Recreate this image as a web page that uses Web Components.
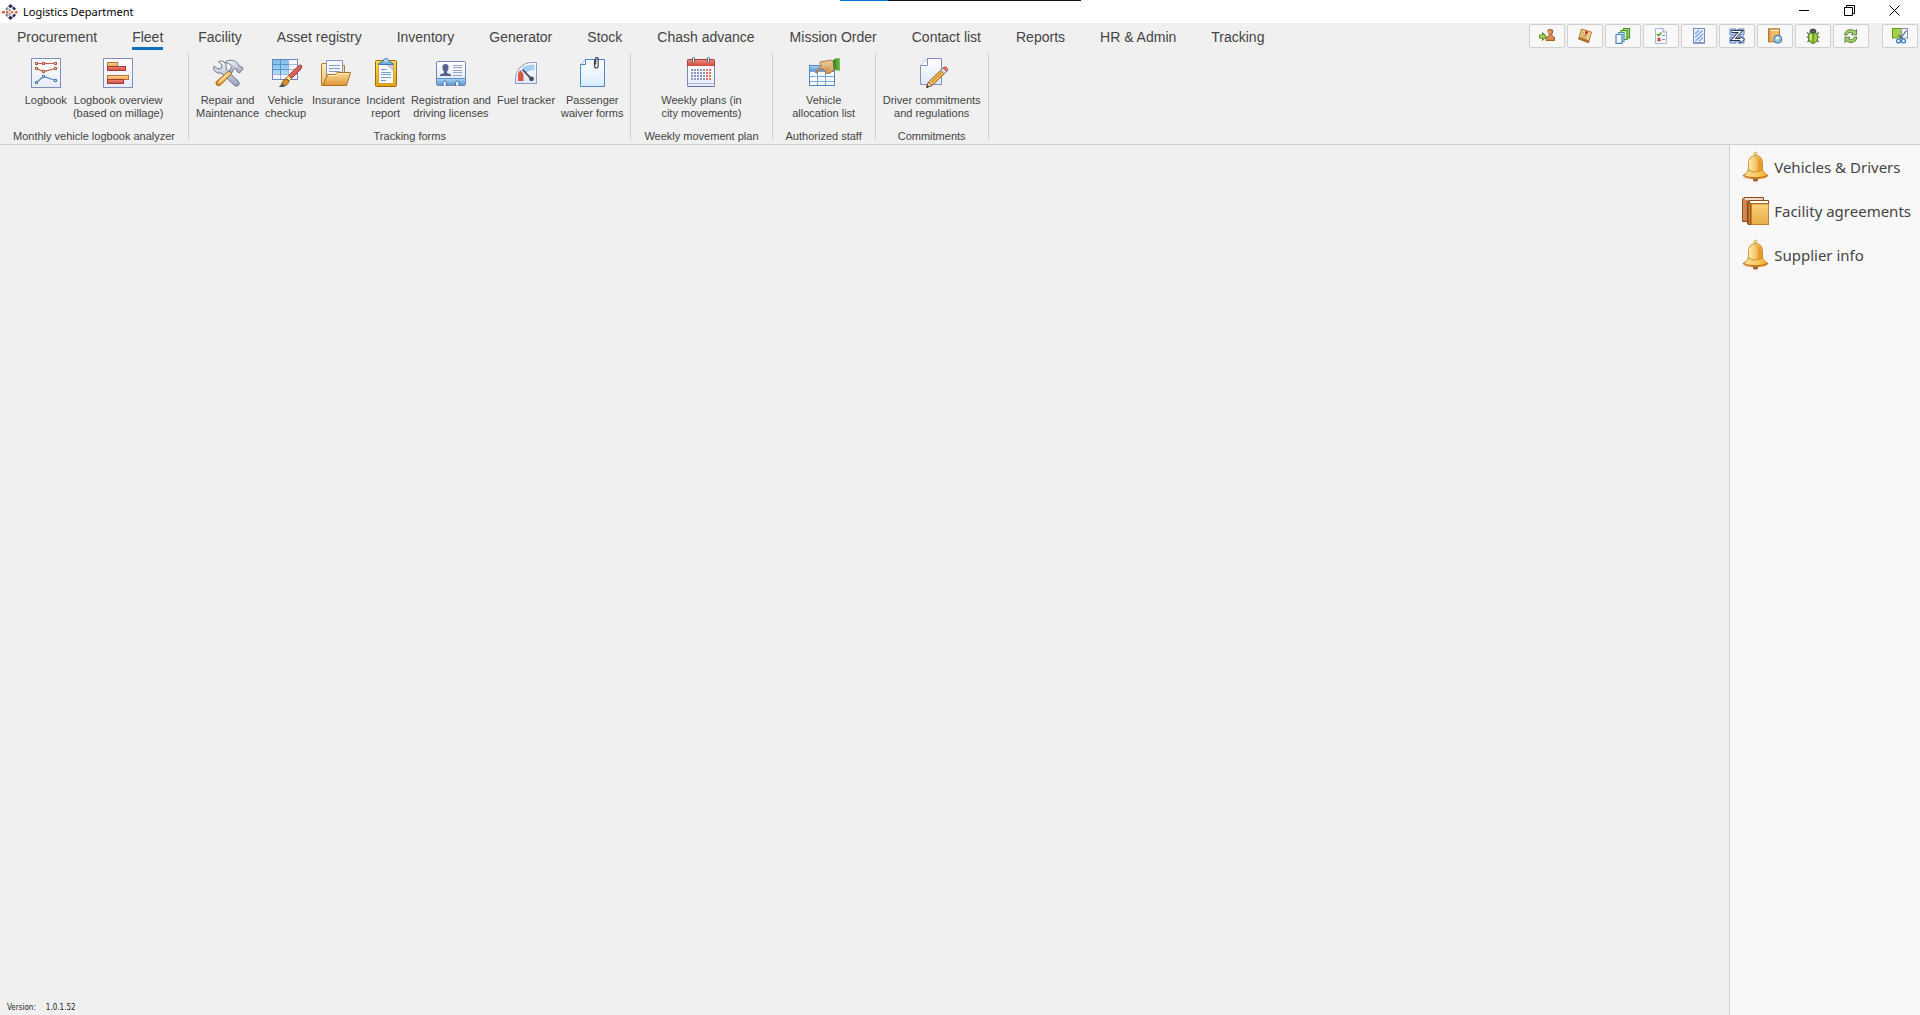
<!DOCTYPE html>
<html lang="en">
<head>
<meta charset="utf-8">
<title>Logistics Department</title>
<style>
html, body { height: 100%; margin: 0; }
body { background: #f0f0f0; color: #444; font: 11px/13px "Liberation Sans", Arial, sans-serif; }
</style>
</head>
<body>
<app-window>
  <title-bar slot="title">Logistics Department</title-bar>

  <tab-link slot="tab">Procurement</tab-link>
  <tab-link slot="tab" active>Fleet</tab-link>
  <tab-link slot="tab">Facility</tab-link>
  <tab-link slot="tab">Asset registry</tab-link>
  <tab-link slot="tab">Inventory</tab-link>
  <tab-link slot="tab">Generator</tab-link>
  <tab-link slot="tab">Stock</tab-link>
  <tab-link slot="tab">Chash advance</tab-link>
  <tab-link slot="tab">Mission Order</tab-link>
  <tab-link slot="tab">Contact list</tab-link>
  <tab-link slot="tab">Reports</tab-link>
  <tab-link slot="tab">HR &amp; Admin</tab-link>
  <tab-link slot="tab">Tracking</tab-link>

  <tool-button slot="tool" icon="stamp" label="Switch user"></tool-button>
  <tool-button slot="tool" icon="note" label="Notes"></tool-button>
  <tool-button slot="tool" icon="stack" label="Cascade"></tool-button>
  <tool-button slot="tool" icon="checklist" label="Checklist"></tool-button>
  <tool-button slot="tool" icon="hatch" label="Background"></tool-button>
  <tool-button slot="tool" icon="zorder" label="Order"></tool-button>
  <tool-button slot="tool" icon="bookweb" label="Directory"></tool-button>
  <tool-button slot="tool" icon="bug" label="Report a bug"></tool-button>
  <tool-button slot="tool" icon="refresh" label="Refresh"></tool-button>
  <tool-button slot="snip" icon="snip" label="Snip"></tool-button>

  <ribbon-group slot="group" caption="Monthly vehicle logbook analyzer">
    <ribbon-button icon="linechart">Logbook</ribbon-button>
    <ribbon-button icon="barchart">Logbook overview<br>(based on millage)</ribbon-button>
  </ribbon-group>
  <ribbon-group slot="group" caption="Tracking forms">
    <ribbon-button icon="tools">Repair and<br>Maintenance</ribbon-button>
    <ribbon-button icon="brushgrid">Vehicle<br>checkup</ribbon-button>
    <ribbon-button icon="folder">Insurance</ribbon-button>
    <ribbon-button icon="clipboard">Incident<br>report</ribbon-button>
    <ribbon-button icon="idcard">Registration and<br>driving licenses</ribbon-button>
    <ribbon-button icon="gauge">Fuel tracker</ribbon-button>
    <ribbon-button icon="clippage">Passenger<br>waiver forms</ribbon-button>
  </ribbon-group>
  <ribbon-group slot="group" caption="Weekly movement plan">
    <ribbon-button icon="calendar">Weekly plans (in<br>city movements)</ribbon-button>
  </ribbon-group>
  <ribbon-group slot="group" caption="Authorized staff">
    <ribbon-button icon="handgrid">Vehicle<br>allocation list</ribbon-button>
  </ribbon-group>
  <ribbon-group slot="group" caption="Commitments">
    <ribbon-button icon="pencilpage">Driver commitments<br>and regulations</ribbon-button>
  </ribbon-group>

  <side-link slot="side" icon="bell">Vehicles &amp; Drivers</side-link>
  <side-link slot="side" icon="books">Facility agreements</side-link>
  <side-link slot="side" icon="bell">Supplier info</side-link>

  <version-label slot="version" number="1.0.1.52">Version:</version-label>
</app-window>

<script>
const grad = (id, a, b, dir = "x2='0' y2='1'") =>
  `<linearGradient id="${id}" x1="0" y1="0" ${dir}><stop offset="0" stop-color="${a}"/><stop offset="1" stop-color="${b}"/></linearGradient>`;

const calendarDots = () => {
  let s = "";
  for (let r = 0; r < 4; r++)
    for (let c = 0; c < 7; c++)
      s += `<rect x="${6 + c * 3}" y="${12 + r * 3}" width="2" height="2" fill="${c > 4 ? "#e8705c" : "#8b97c4"}"/>`;
  return s;
};

/* Large icons use a 32-unit box, toolbar icons a 16-unit box. */
const ICONS = {
  linechart: [32, `${grad("g", "#ffffff", "#e6ebf6")}
    <rect x="1.5" y="1.5" width="29" height="29" fill="url(#g)" stroke="#7f8fbd"/>
    <g fill="none" stroke-width="1.2"><path d="M6.5 6.5H25.5" stroke="#c9604f"/><path d="M6.5 11.5L13.5 14.5L25.5 11.5" stroke="#bd6344"/><path d="M6.5 25.5L13.5 19.5L25.5 23.5" stroke="#4f8ac8"/></g>
    <g fill="#fff" stroke-width="1.1"><g stroke="#b8463f"><circle cx="6.5" cy="6.5" r="1.2"/><circle cx="13.5" cy="6.5" r="1.2"/><circle cx="25.5" cy="6.5" r="1.2"/></g>
    <g stroke="#b4532f"><circle cx="6.5" cy="11.5" r="1.2"/><circle cx="13.5" cy="14.5" r="1.2"/><circle cx="25.5" cy="11.5" r="1.2"/></g>
    <g stroke="#3f6fb0"><circle cx="6.5" cy="25.5" r="1.2"/><circle cx="13.5" cy="19.5" r="1.2"/><circle cx="25.5" cy="23.5" r="1.2"/></g></g>`],
  barchart: [32, `${grad("g", "#ffffff", "#e6ebf6")}${grad("o", "#fbd99a", "#e8a54c")}${grad("r", "#ee8a7c", "#cc4a42")}
    <rect x="1.5" y="1.5" width="29" height="29" fill="url(#g)" stroke="#7f8fbd"/>
    <rect x="5.5" y="5.5" width="10" height="4" fill="url(#o)" stroke="#b8742e"/><rect x="5.5" y="9.5" width="18" height="4" fill="url(#r)" stroke="#a33a36"/>
    <rect x="5.5" y="18.5" width="21" height="4" fill="url(#o)" stroke="#b8742e"/><rect x="5.5" y="22.5" width="16" height="4" fill="url(#r)" stroke="#a33a36"/>`],
  tools: [32, `${grad("m", "#f4f6fa", "#98a3b8")}${grad("o", "#ffd98a", "#e08f1e")}
    <path d="M2 9C0.500 13 4 17 9 16L12 18.500L22.500 28.500Q25 30 26.800 28Q28 26 26 24L16 14.500L14 11.500C15 7.500 12.500 3.500 8 4L6.500 5L10 8L9.500 11L6 12Z" fill="url(#m)" stroke="#6c778d"/>
    <path d="M17 14L19.500 16.800L9 27.500Q7 29.800 4.800 28Q2.800 26 5 24Z" fill="url(#o)" stroke="#9a6220"/>
    <path d="M13 5.500C16 2.500 21 2.500 25 5.500L27 9L30 10L31 12L27.500 16L25 14.500L24.500 12L22 11.500L19.500 16L17 14L20 9.500C18 6.500 15.500 6 13 5.500Z" fill="url(#m)" stroke="#6c778d"/>
    <path d="M15 17.500L7 25.500" stroke="#ffeab8" stroke-width="1.200"/>`],
  brushgrid: [32, `${grad("b", "#7ebce8", "#b5dcf4")}${grad("r", "#f0907e", "#c23a34", "x2='1' y2='1'")}
    <rect x="2.500" y="2.500" width="25" height="20" fill="#f4f6fc" stroke="#6f86c4"/><rect x="3" y="3" width="16" height="15" fill="url(#b)"/>
    <path d="M3 7.500H27M3 12.500H27M3 17.500H27M10.500 3V22M18.500 3V22" stroke="#a5b6dc" fill="none" stroke-width="1"/><path d="M3 7.500H19M3 12.500H19M10.500 3V18" stroke="#5593cc" fill="none"/>
    <path d="M31 8Q33 10.500 30 13L21.500 21.500L18.500 18.500L27.500 10Q29.500 7.500 31 8Z" fill="url(#r)" stroke="#a8332f"/>
    <path d="M18.500 18.500L21.500 21.500L19 24L16 21Z" fill="#f6d98c" stroke="#8a6a3a" stroke-width=".8"/>
    <path d="M16 21.500L19 24.500C18 28 14 30 9.500 29.500C12 28 12.500 22.500 16 21.500Z" fill="#d98f24" stroke="#6b4514" stroke-width=".8"/><path d="M9.500 29.800Q12 29 12.800 26.500L15 29Q12.500 30.300 9.500 29.800Z" fill="#24508c"/>`],
  folder: [32, `${grad("a", "#fff0c4", "#f0b95a")}${grad("b", "#ffdf9c", "#dd9334")}
    <path d="M1.500 28.500V7.500Q1.500 6.500 3 6.500H6L8 8.500H24.500V28.500Z" fill="url(#a)" stroke="#b07a30"/>
    <path d="M6.500 3.500H22.500V22H6.500Z" fill="#f5f7fd" stroke="#8793c4"/><path d="M9 8.500H20M9 11.500H20M9 14.500H20" stroke="#8d9ac8"/>
    <path d="M3 28.500L7.500 17.500H15L17.500 15.500H30.500L26.500 28.500Z" fill="url(#b)" stroke="#b06d22"/><path d="M8.500 18.500H15.500L18 16.500H29.500" stroke="#fff2c8" fill="none"/>`],
  clipboard: [32, `${grad("y", "#ffe04a", "#e5a010")}${grad("c", "#e0f1fd", "#5b9ad6")}
    <rect x="5.500" y="3.500" width="21" height="26" rx="1" fill="url(#y)" stroke="#9a6a10"/>
    <rect x="8.500" y="6.500" width="15" height="20" fill="#fafbff" stroke="#c49a2a" stroke-width=".8"/>
    <path d="M15 7H23V14Z" fill="#c8cbd8"/><path d="M11 12.500H17M11 15.500H21M11 17.500H21M11 20.500H21M11 23.500H16" stroke="#7a9bd0"/>
    <path d="M8.500 7.500Q9 5 12.500 5Q13.500 1.500 16 1.500T19.500 5Q23 5 23.500 7.500Z" fill="url(#c)" stroke="#3e78b8"/>`],
  idcard: [32, `${grad("w", "#ffffff", "#e4eaf6")}${grad("b", "#a6d4f2", "#5b9cd4")}
    <path d="M2 21.500H30V28H2Z" fill="url(#b)"/><rect x="1.500" y="4.500" width="29" height="24" rx="1" fill="none" stroke="#7585b8"/><path d="M2 5H30V21H2Z" fill="url(#w)"/><path d="M2 21.500H30" stroke="#5c8fc8"/>
    <path d="M8 28.500V25.500A1.800 1.800 0 0 1 11.500 25.500V28.500M20.500 28.500V25.500A1.800 1.800 0 0 1 24 25.500V28.500" fill="#f0f0f0" stroke="#3f6ca8"/>
    <path d="M7.500 9.500Q7.500 7 10.500 7T13.500 9.500Q13.800 13 12 14.500V16L16 17.500V19H5V17.500L9 16V14.500Q7.200 13 7.500 9.500Z" fill="#56618e"/>
    <path d="M18 8.500H27M18 10.500H27M18 13.500H27M18 15.500H27M18 18.500H27" stroke="#9aa6cc"/>`],
  gauge: [32, `${grad("w", "#ffffff", "#dfe6f3")}
    <path d="M26.500 5.500V26.500H5.500V21C6.500 12 13 5.500 22 5.500Z" fill="url(#w)" stroke="#8d99c6"/>
    <path d="M12 10.500Q17 7.500 24.500 7.500V13Q19 13 15.500 15.500Z" fill="#a4cfee"/><path d="M8 24V17Q9.500 13.500 10.500 13L13.500 17V24Z" fill="#d95645"/>
    <path d="M12.500 12.500L20.500 21" stroke="#3a4258" stroke-width="1.800"/><circle cx="21.500" cy="21.800" r="2.400" fill="#444c64"/>`],
  clippage: [32, `${grad("w", "#ffffff", "#d6ecfb")}
    <path d="M9.500 2.500H28.500V29.500H4.500V7.500Z" fill="url(#w)" stroke="#4e88c8"/><path d="M4.500 7.500H9.500V2.500" fill="#fff" stroke="#4e88c8"/>
    <path d="M18.500 3V8.500Q18.500 11 20.300 11T22.200 8.500V2Q22.200 .5 20.800 .5T19.700 2V7.500" fill="none" stroke="#3d4656" stroke-width="1.200"/>`],
  calendar: [32, `${grad("w", "#ffffff", "#e8ecf8")}${grad("r", "#f0907e", "#cf463c")}
    <rect x="2.500" y="3.500" width="27" height="26" rx="1" fill="url(#w)" stroke="#7a86b4"/><path d="M2 2.500H30V9H2Z" fill="url(#r)"/><path d="M2.500 9V3.500Q2.500 2.500 3.500 2.500H28.500Q29.500 2.500 29.500 3.500V9" fill="none" stroke="#a83f38"/>
    <path d="M3 26.500H29" stroke="#b0bbdc"/><path d="M2.500 29.500H29.500" stroke="#5f6ea6"/>${calendarDots()}
    <g fill="#f2f2f4" stroke="#555d70"><rect x="7.500" y=".5" width="2" height="5" rx="1"/><rect x="22.500" y=".5" width="2" height="5" rx="1"/></g>`],
  handgrid: [32, `${grad("b", "#a9d2f2", "#5e97d2")}${grad("h", "#f4cf9e", "#d0935a")}${grad("s", "#2f7a20", "#78c24a", "x2='1' y2='0'")}
    <rect x="1.500" y="8.500" width="25" height="20" fill="#fafcff" stroke="#4f8ac8"/><rect x="2" y="9" width="24" height="5" fill="url(#b)"/>
    <path d="M2 14.500H26M2 19.500H26M2 24.500H26M9.500 14V28M17.500 14V28" stroke="#7ba8d8"/>
    <path d="M7.500 15.500L13.500 8L12 6.500Q11.500 4.500 14 4.500L18.500 4Q21 2 25 4L26.500 13L21 16.500L18.500 16.500L15.500 12.500L12.500 11.500L9.500 15.500Q8.500 17 7.500 15.500Z" fill="url(#h)" stroke="#99622e" stroke-width=".8"/>
    <path d="M15 11.500L18 14.500M17.500 9.500L20.500 13" stroke="#b07a48" stroke-width=".7"/>
    <path d="M25 3L28 1.200H32V14L29.500 13.500Q26.500 13 25.500 11Z" fill="url(#s)"/>`],
  pencilpage: [32, `${grad("w", "#ffffff", "#dfe6f5")}${grad("p", "#ffe08a", "#e8951e", "x2='1' y2='1'")}
    <path d="M11.500 1.500H25.500V27.500H4.500V8.500Z" fill="url(#w)" stroke="#8190c4"/><path d="M4.500 8.500H11.500V1.500" fill="#fff" stroke="#8190c4"/>
    <path d="M27 11L30.500 14.500L16 28.500L10.500 30.500L12.500 25Z" fill="url(#p)" stroke="#8e5a1e"/><path d="M15.500 25L27.500 13.500" stroke="#b8702a"/>
    <path d="M12.500 25L16 28.500L10.500 30.500Z" fill="#f3d9b4" stroke="#6b5138" stroke-width=".8"/><path d="M11.500 28L13 29.700L10.300 30.700Z" fill="#333"/>
    <path d="M24.800 13L27.300 10.500L31 14L28.300 16.500Z" fill="#d9dfec" stroke="#7c86a4" stroke-width=".7"/><path d="M27.500 10.500Q29 9 31 11T31 14L30.500 14.500L27 11Z" fill="#e87868" stroke="#a8423a" stroke-width=".8"/>`],
  bell: [32, `${grad("y", "#fff0b4", "#e89a1c", "x2='1' y2='0'")}${grad("z", "#ffe9a0", "#f0b030", "x2='1' y2='0'")}
    <circle cx="16.500" cy="28" r="2.600" fill="#a65a1c"/><circle cx="16.500" cy="2.800" r="1.500" fill="#ffe6a0" stroke="#c98c2c" stroke-width=".8"/>
    <path d="M9.500 18C9.500 21 7 22.500 4 24.500C5 26.800 10 27.500 16.500 27.500S28 26.800 29 24.500C26 22.500 23.500 21 23.500 18Z" fill="url(#z)" stroke="#c07c1a" stroke-width=".9"/>
    <path d="M16.500 4.500C11.500 4.500 9.500 8.500 9.500 12V19Q16.500 23 23.500 19V12C23.500 8.500 21.500 4.500 16.500 4.500Z" fill="url(#y)" stroke="#c98c2c" stroke-width=".9"/>
    <path d="M18 6.500Q20 12 19 20.500L21.500 19.500Q22.500 9 18 6.500Z" fill="#d97e10" opacity=".45"/>
    <path d="M4.500 24.500Q16.500 29 28.500 24.500" fill="none" stroke="#b8651a" stroke-width=".9"/>`],
  books: [32, `${grad("a", "#d98c5a", "#a8501e", "x2='1' y2='0'")}${grad("b", "#f6d07a", "#e8ad48")}
    <path d="M3.500 4L5 2.500H24.500V26.500H3.500Z" fill="url(#a)" stroke="#8d4a1c"/><path d="M6 4H24" stroke="#fff" stroke-width="1.500"/><path d="M6.500 5.500H24V26H6.500Z" fill="#c9824a"/>
    <path d="M8.500 7.500L10.500 5.500H29.500V29.500H9.500Q8.500 29.500 8.500 28Z" fill="#a85a1c" stroke="#8d4a1c"/><path d="M11 7H29" stroke="#fff" stroke-width="2"/><path d="M12.500 9H29.500V29.500H12.500Z" fill="url(#b)" stroke="#c0822a" stroke-width=".8"/><path d="M10.500 9V29" stroke="#c9803c" stroke-width="1"/>`],
  logo: [16, `<g fill="#2e3058"><path d="M6 2.200L8.500 0L11 2.200L8.500 4.200Z"/><path d="M10 4L12 2.500L14 5L12 6.500Z"/><path d="M6 13.800L8.500 16L11 13.800L8.500 11.800Z"/><path d="M10 12L12 13.500L14 11L12 9.500Z"/></g>
    <g fill="#7d8ea0"><path d="M3 5L5.500 3L7 5L5 6.500Z"/><path d="M3 11L5.500 13L7 11L5 9.500Z"/><rect x="7" y="5" width="1.500" height="2.500"/><rect x="7" y="9" width="1.500" height="2.500"/></g>
    <g fill="#e2643c"><path d="M0 7H3V9.500H0Z"/><path d="M4 7H6.500V9.500H4Z"/><path d="M8.500 8.200L10 6.500L11.500 8.200L10 10Z"/><path d="M12.500 8.200L14.200 6.500L16 8.200L14.200 10Z"/></g>`],
  stamp: [16, `<path d="M.5 7H3.500V4.500L7.500 8.500L3.500 12.500V10H.5Z" fill="#8cc63a" stroke="#4b8a1c" stroke-width=".9"/><path d="M1.500 8.200H4.500" stroke="#dff2b0"/>
    <path d="M9 2Q11.500 1 13.500 2Q14.500 4 12.800 6L13 8L15.500 9.500V12.500H7V10L10 8L10.200 6Q8 4 9 2Z" fill="#d98b50" stroke="#9a5222" stroke-width=".9"/><path d="M7 12.300H15.500" stroke="#b8641e"/><path d="M10 3V5" stroke="#f6cfa0"/>`],
  note: [16, `<path d="M4.500 1L14.500 4L11.500 14.800L1.500 11Z" fill="#f0cd88" stroke="#a8742c" stroke-width=".9"/><path d="M1.500 11L2.500 9L12.200 12.400L11.500 14.800Z" fill="#a87034"/><path d="M4.500 4L7 4.800M4 6.500L10.500 8.500M3.500 8.500L9 10.200" stroke="#b98c48" stroke-width=".8"/><circle cx="9.500" cy="4.500" r="1.500" fill="#c8282a"/><path d="M9 6L8 7.500" stroke="#6c1c1c" stroke-width=".8"/>`],
  stack: [16, `<g stroke-width="1.2"><path d="M8.500 .5H14.500V10H8.500Z" fill="#a9d67c" stroke="#3e9a18"/><path d="M6 2.500H12V11.500H6Z" fill="#d9efb8" stroke="#3e9a18"/><path d="M3.500 4.500H9V13.500H3.500Z" fill="#d4e8f8" stroke="#4c94b4"/><path d="M1 6.500H7V15.300H1Z" fill="#f2f8ff" stroke="#4c84c4"/></g>`],
  checklist: [16, `<path d="M2.500 .5H10L13.500 4V15.500H2.500Z" fill="#f7f9fd" stroke="#aab6dc"/><path d="M10 .5V4H13.500" fill="#fff" stroke="#8a9ad0"/><path d="M4 6L5.500 7.500L8.500 4.500" fill="none" stroke="#5c9a1c" stroke-width="1.600"/><path d="M4.500 10L7.500 13M7.500 10L4.500 13" stroke="#d0403a" stroke-width="1.600"/><path d="M9 7.500H12M9 11.500H12" stroke="#7390cc"/>`],
  hatch: [16, `<rect x="2.500" y=".5" width="11" height="14.500" fill="#e9f1fb" stroke="#7589c4"/><path d="M4 6L8 2M4 9.500L11.500 2.500M4.500 13L12 6M8 13.500L12 9.500" stroke="#7ba2da" stroke-width="1.200"/><path d="M2.500 15H13.500" stroke="#5d70b0"/>`],
  zorder: [16, `<path d="M1 1H7V7H1ZM9 1H15V7H9ZM1 9H7V15H1ZM9 9H15V15H9Z" fill="#b4d4f2" stroke="#5b82c4"/><path d="M2.500 3.500H11.500L4 11.500H12" fill="none" stroke="#2c3650" stroke-width="3"/><path d="M11 8.500L15.500 11.500L11 15Z" fill="#fff" stroke="#2c3650" stroke-width=".9"/><path d="M3 3.500H11.500L4 11.500H13" fill="none" stroke="#fff" stroke-width="1.200"/>`],
  bookweb: [16, `<rect x="1.500" y=".8" width="11" height="13" fill="#f0b868" stroke="#b07428"/><path d="M3 1.500V13.500" stroke="#c98a3a"/><path d="M3.500 2.500H12" stroke="#fff2d0"/><circle cx="10.800" cy="11.200" r="4" fill="#9cc8ea" stroke="#3e6ea8"/><path d="M8.500 9.500L11 8.500L12 10.500L10 12Z" fill="#eef8e4"/><path d="M12 12L13.800 11L13 14Z" fill="#7cb258"/>`],
  bug: [16, `<path d="M2 4.500L4.500 6.500M1.500 9H4M2.500 14L4.500 12M14 4.500L11.500 6.500M14.500 9H12M13.500 14L11.500 12" stroke="#54603c" stroke-width="1.100"/><path d="M5 4.500Q4.500 1 8 1T11 4.500Z" fill="#566072" stroke="#343c4c"/><ellipse cx="8" cy="9.500" rx="4.700" ry="5.800" fill="#9bcb3c" stroke="#4f7c1c"/><path d="M8 4V15.500" stroke="#4f7c1c"/><path d="M6 6V12" stroke="#dff0a4" stroke-width="1.400"/><path d="M5 4.200H11L9.500 5.500H6.500Z" fill="#3d4656"/>`],
  refresh: [16, `<g fill="#a9cf74" stroke="#4c7a2a" stroke-width=".9"><path d="M1.500 7Q2 2 7.500 1.500Q10 1.500 11.800 3.200L13.500 1.500V6.800H8.500L10 5Q8 3.600 6 4.600Q4.500 5.300 4 7Z"/><path d="M14 9Q13.500 14 8 14.500Q5.500 14.500 3.700 12.800L2 14.500V9.200H7L5.500 11Q7.500 12.400 9.500 11.400Q11 10.700 11.500 9Z"/></g>`],
  snip: [16, `<rect x=".5" y=".5" width="9" height="9.500" fill="#a6d04a" stroke="#5f9a24"/><rect x="9.500" y=".5" width="6" height="9.500" fill="#f4f6fc" stroke="#8692c0"/><path d="M14.500 2.500L8 11M6.500 7L11 11" stroke="#55637a" stroke-width="1.200"/><circle cx="6.500" cy="13" r="1.900" fill="#fff" stroke="#3a82c8" stroke-width="1.400"/><circle cx="11.500" cy="13" r="1.900" fill="#fff" stroke="#3a82c8" stroke-width="1.400"/>`]
};

const drawIcon = name => {
  const [size, body] = ICONS[name];
  return `<svg class="icon" width="${size}" height="${size}" viewBox="0 0 ${size} ${size}" aria-hidden="true">${body}</svg>`;
};

class Base extends HTMLElement {
  connectedCallback() {
    if (this.shadowRoot) return;
    this.attachShadow({ mode: "open" }).innerHTML =
      `<style>*{box-sizing:border-box} button,a{font:inherit;color:inherit;text-decoration:none} .icon{display:block;flex:none}</style>` + this.render();
  }
}

customElements.define("app-window", class extends Base {
  render() {
    return `<style>
      :host { display: flex; flex-direction: column; min-height: 100vh; }
      .bar { display: flex; justify-content: space-between; padding-top: 1px; height: 28px; }
      nav { display: flex; gap: 1px; }
      .tools { display: flex; gap: 2px; padding-right: 2px; }
      .snip { padding-left: 11px; }
      .ribbon { display: flex; padding: 2px 0 4px; border-bottom: 1px solid #d0d0d0; }
      .body { flex: 1; display: flex; }
      main { flex: 1; display: flex; align-items: flex-end; }
      aside { background: #f8f8f8; border-left: 1px solid #d0d0d0; padding: 0 9px; }
    </style>
    <slot name="title"></slot>
    <div class="bar"><nav><slot name="tab"></slot></nav>
      <div class="tools"><slot name="tool"></slot><div class="snip"><slot name="snip"></slot></div></div></div>
    <div class="ribbon"><slot name="group"></slot></div>
    <div class="body"><main><slot name="version"></slot></main><aside><slot name="side"></slot></aside></div>`;
  }
});

customElements.define("title-bar", class extends Base {
  render() {
    return `<style>
      :host { display: flex; align-items: center; height: 23px; padding: 0 3px 0 2px; gap: 5px; background: #fff; color: #000; position: relative; font: 11px/16px "Noto Sans", "Open Sans", sans-serif; }
      .name { flex: 1; }
      .controls { display: flex; align-self: flex-start; }
      button { width: 45px; height: 21px; padding: 0; border: 0; background: none; display: flex; align-items: center; justify-content: center; }
      .progress { position: absolute; top: 0; left: 50%; width: 241px; height: 1px; margin-left: -120px; display: flex; background: #111; }
      .progress i { width: 20%; background: #0078d7; }
    </style>
    ${drawIcon("logo")}<span class="name"><slot></slot></span>
    <div class="controls">
      <button aria-label="Minimize"><svg width="11" height="11"><path d="M0 5.500H10" stroke="#000"/></svg></button>
      <button aria-label="Restore"><svg width="11" height="11"><path d="M.5 2.500H8.500V10.500H.5ZM2.500 2.500V.5H10.500V8.500H8.500" fill="none" stroke="#000"/></svg></button>
      <button aria-label="Close"><svg width="11" height="11"><path d="M.5 .5L10.500 10.500M10.500 .5L.5 10.500" stroke="#000"/></svg></button>
    </div><div class="progress"><i></i></div>`;
  }
});

customElements.define("tab-link", class extends Base {
  render() {
    return `<style>
      :host { display: block; padding: 4px 17px 0; font-size: 14px; line-height: 18px; white-space: nowrap; }
      a { display: block; height: 21px; }
      :host([active]) a { height: 22px; border-bottom: 3px solid #106ebe; }
    </style><a href="#"><slot></slot></a>`;
  }
});

customElements.define("tool-button", class extends Base {
  render() {
    return `<style>
      :host { display: block; }
      button { width: 36px; height: 24px; padding: 0; background: #f8f8f8; border: 1px solid #d0d0d0; border-radius: 2px; display: flex; align-items: center; justify-content: center; }
    </style><button aria-label="${this.getAttribute("label")}">${drawIcon(this.getAttribute("icon"))}</button>`;
  }
});

customElements.define("ribbon-group", class extends Base {
  render() {
    return `<style>
      :host { display: flex; flex-direction: column; justify-content: space-between; height: 87px; border-right: 1px solid #d0d0d0; }
      .items { display: flex; justify-content: center; padding: 4px 4px 0; }
      .caption { padding: 0 13px; text-align: center; white-space: nowrap; line-height: 8px; }
    </style><div class="items"><slot></slot></div><div class="caption">${this.getAttribute("caption")}</div>`;
  }
});

customElements.define("ribbon-button", class extends Base {
  render() {
    return `<style>
      :host { display: block; }
      button { display: flex; flex-direction: column; align-items: center; gap: 5px; padding: 0 3px; border: 0; background: none; white-space: nowrap; text-align: center; }
    </style><button>${drawIcon(this.getAttribute("icon"))}<span><slot></slot></span></button>`;
  }
});

customElements.define("side-link", class extends Base {
  render() {
    return `<style>
      :host { display: block; font: 15px/20px "Noto Sans", "Open Sans", sans-serif; white-space: nowrap; }
      a { display: flex; align-items: center; gap: 3px; height: 44px; }
    </style><a href="#">${drawIcon(this.getAttribute("icon"))}<span><slot></slot></span></a>`;
  }
});

customElements.define("version-label", class extends Base {
  render() {
    return `<style>
      :host { display: flex; gap: 10px; padding: 0 7px 1px; color: #222; font: 8px/12px "DejaVu Sans Condensed", "DejaVu Sans", sans-serif; }
    </style><span><slot></slot></span><span>${this.getAttribute("number")}</span>`;
  }
});
</script>
</body>
</html>
